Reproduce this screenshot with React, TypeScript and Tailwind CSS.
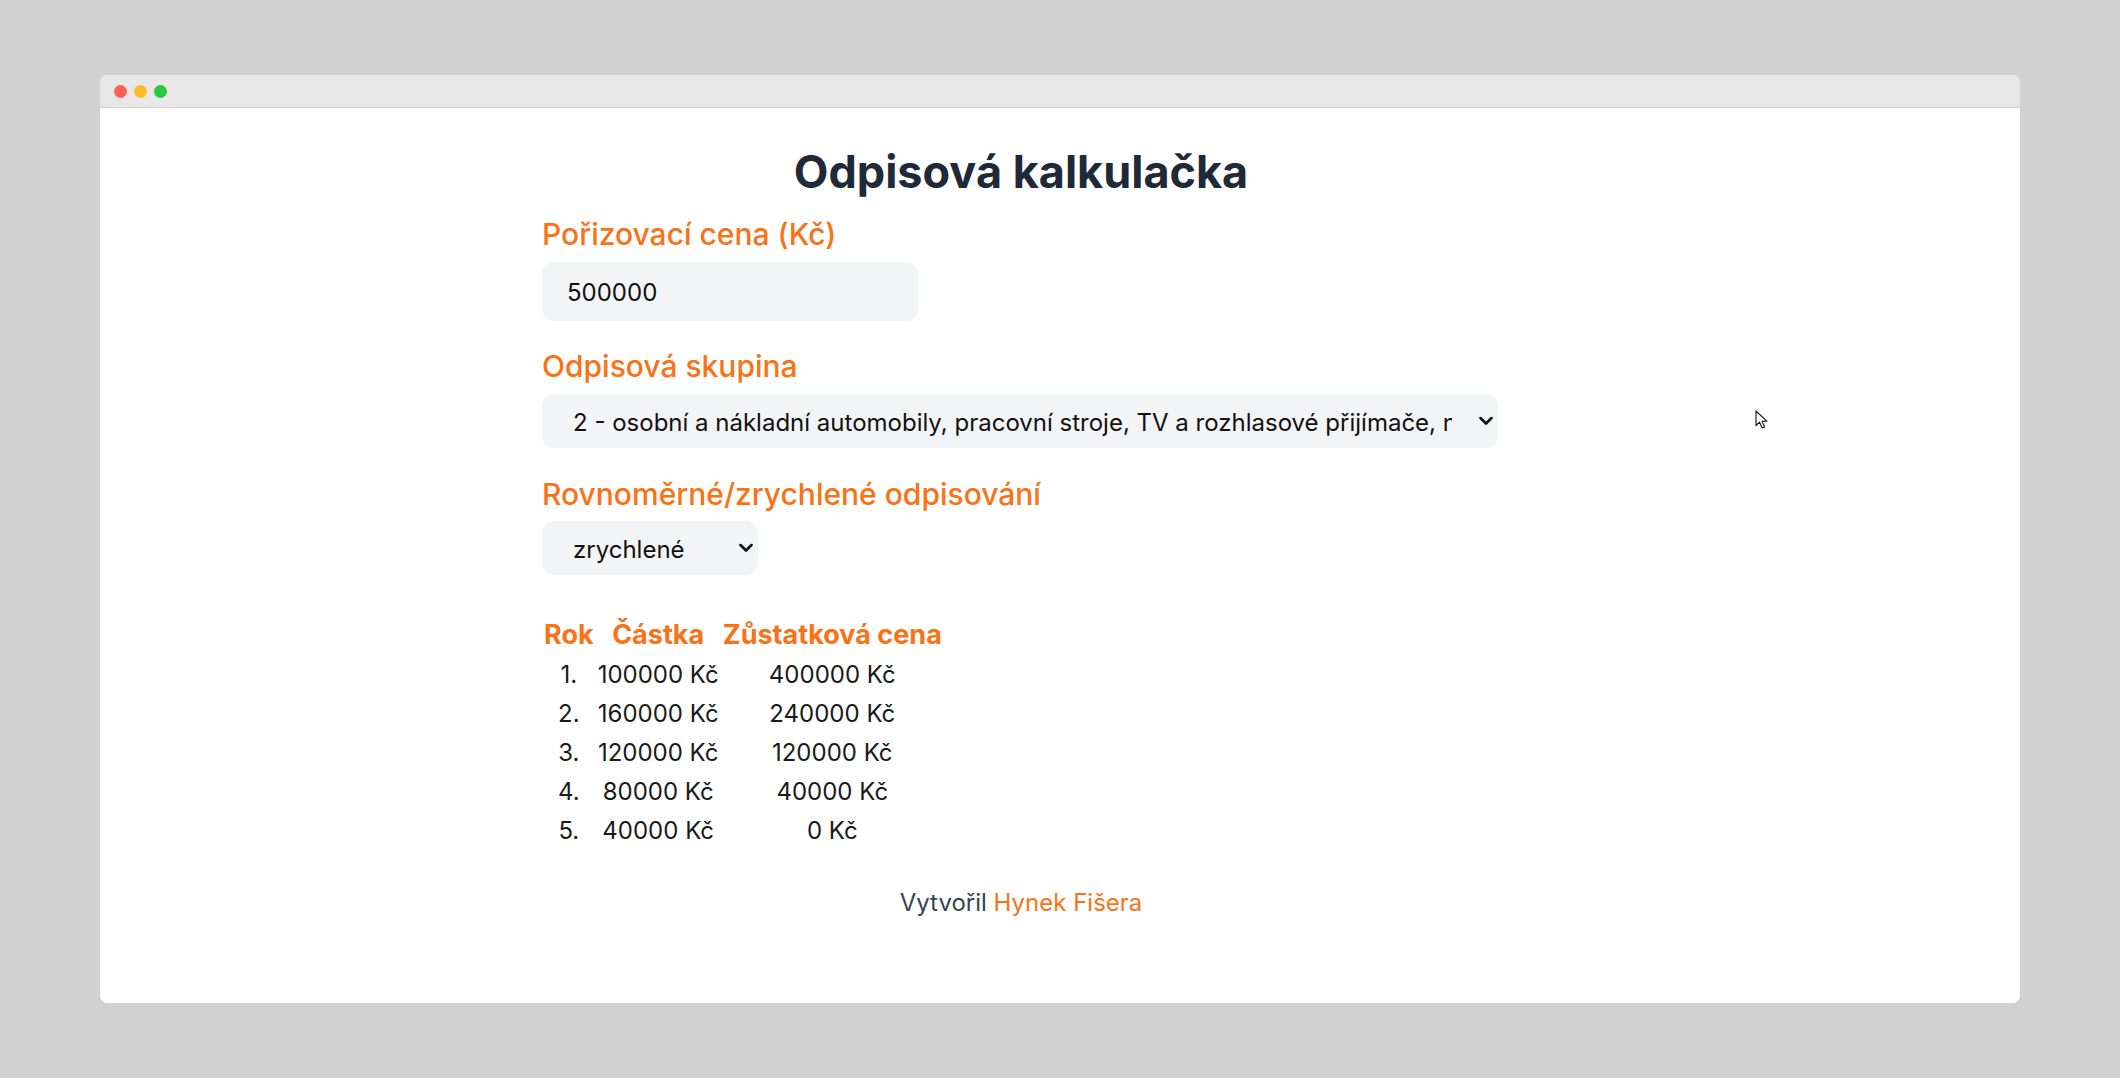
import React from 'react';

const rows = [
  { rok: '1.', castka: '100000 Kč', zustatek: '400000 Kč' },
  { rok: '2.', castka: '160000 Kč', zustatek: '240000 Kč' },
  { rok: '3.', castka: '120000 Kč', zustatek: '120000 Kč' },
  { rok: '4.', castka: '80000 Kč', zustatek: '40000 Kč' },
  { rok: '5.', castka: '40000 Kč', zustatek: '0 Kč' },
];

const Chevron = () => (
  <svg
    className="pointer-events-none absolute right-[5px] top-1/2 -translate-y-1/2"
    width="14"
    height="9"
    viewBox="0 0 14 9"
    fill="none"
  >
    <path d="M1.5 1.5 L7 7 L12.5 1.5" stroke="#111" strokeWidth="2.6" strokeLinecap="round" strokeLinejoin="round" />
  </svg>
);

const Cursor = () => (
  <svg className="absolute left-[1655px] top-[335px]" width="14" height="20" viewBox="0 0 14 20">
    <path
      d="M1 1 L1 15.5 L4.6 12.2 L7.2 18 L9.6 17 L7.1 11.3 L12 11.3 Z"
      fill="#fff"
      stroke="#111"
      strokeWidth="1.1"
      strokeLinejoin="round"
    />
  </svg>
);

const App = () => {
  return (
    <div className="min-h-[1078px] w-full bg-[#d1d1d1] pt-[75px] font-['Inter',sans-serif]">
      <div className="relative mx-auto flex h-[928px] w-[1920px] flex-col overflow-hidden rounded-[7px] bg-white">
        <div className="flex h-[33px] shrink-0 items-center gap-[7px] border-b border-[#d5d5d5] bg-[#e8e8e8] pl-[14px]">
          <div className="h-[13px] w-[13px] rounded-full bg-[#ff5f57]"></div>
          <div className="h-[13px] w-[13px] rounded-full bg-[#febc2e]"></div>
          <div className="h-[13px] w-[13px] rounded-full bg-[#28c840]"></div>
        </div>

        <div className="ml-[442px] flex w-[958px] flex-col pt-[37px]">
          <h1 className="text-center text-[45px] font-bold leading-[54px] text-[#1f2937]">
            Odpisová kalkulačka
          </h1>

          <label className="mt-[14px] text-[30px] font-medium leading-[42px] text-[#f97316]">
            Pořizovací cena (Kč)
          </label>
          <input
            type="number"
            defaultValue={500000}
            className="mt-[7px] h-[59px] w-[376px] rounded-[12px] bg-[#f3f4f6] px-[25px] pt-[2px] text-[24px] text-[#111] outline-none"
          />

          <label className="mt-[24px] text-[30px] font-medium leading-[42px] text-[#f97316]">
            Odpisová skupina
          </label>
          <div className="relative mt-[7px] w-[956px]">
            <select className="h-[54px] w-full appearance-none overflow-hidden rounded-[12px] bg-[#f3f4f6] pl-[31px] pr-[46px] pt-[3px] text-[24px] text-[#111] outline-none">
              <option>2 - osobní a nákladní automobily, pracovní stroje, TV a rozhlasové přijímače, nábytek</option>
            </select>
            <Chevron />
          </div>

          <label className="mt-[25px] text-[30px] font-medium leading-[42px] text-[#f97316]">
            Rovnoměrné/zrychlené odpisování
          </label>
          <div className="relative mt-[6px] w-[216px]">
            <select
              defaultValue="zrychlene"
              className="h-[54px] w-full appearance-none rounded-[12px] bg-[#f3f4f6] pl-[31px] pr-[30px] pt-[3px] text-[24px] text-[#111] outline-none"
            >
              <option value="rovnomerne">rovnoměrné</option>
              <option value="zrychlene">zrychlené</option>
            </select>
            <Chevron />
          </div>

          <table className="mt-[39px] w-fit text-[24px] leading-[36px]">
            <thead>
              <tr className="text-[27px] leading-[39px] text-[#f97316]">
                <th className="px-[2px] py-[1px] text-center font-bold">Rok</th>
                <th className="px-[2px] py-[1px] text-center font-bold">Částka</th>
                <th className="px-[2px] py-[1px] text-center font-bold">Zůstatková cena</th>
              </tr>
            </thead>
            <tbody className="text-[#1a1a1a]">
              {rows.map((r) => (
                <tr key={r.rok}>
                  <td className="px-[2px] py-[1.5px] text-center">{r.rok}</td>
                  <td className="px-[2px] py-[1.5px] text-center">{r.castka}</td>
                  <td className="px-[2px] py-[1.5px] text-center">{r.zustatek}</td>
                </tr>
              ))}
            </tbody>
          </table>

          <p className="mt-[35px] text-center text-[24px] leading-[36px] text-[#374151]">
            Vytvořil <a className="text-[#f97316]">Hynek Fišera</a>
          </p>
        </div>

        <Cursor />
      </div>
    </div>
  );
};

export default App;
